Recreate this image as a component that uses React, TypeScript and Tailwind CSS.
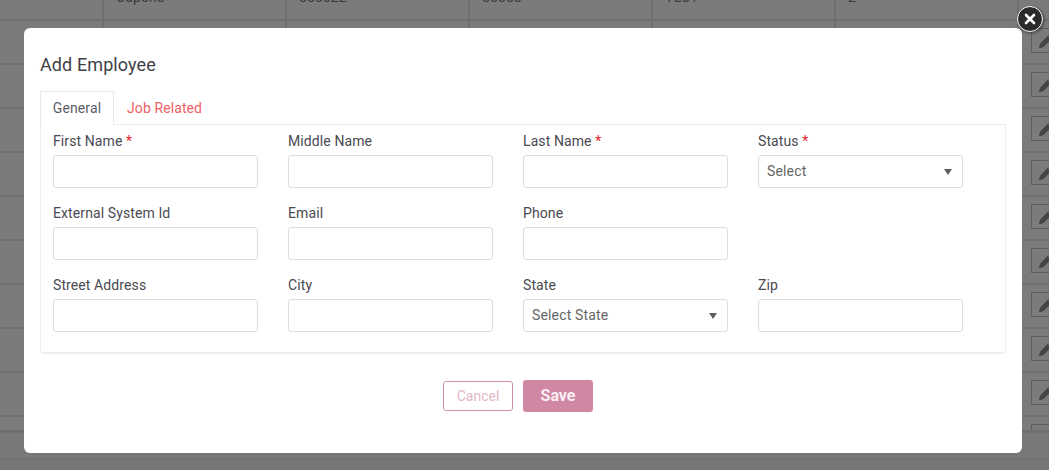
const rows = [0, 1, 2, 3, 4, 5, 6, 7, 8, 9, 10];
const topCells = ["", "Capone", "553022", "55358", "TEST", "2"];

function Pencil() {
  return (
    <svg viewBox="0 0 16 16" className="w-[17px] h-[17px] shrink-0" fill="#454545">
      <path d="M11.5 1.2l3.3 3.3-1.5 1.5L10 2.7zM9.2 3.5l3.3 3.3-7.6 7.6-4 .9.9-4z" />
    </svg>
  );
}

function Row({ first, last }: { first?: boolean; last?: boolean }) {
  return (
    <div className={`flex overflow-hidden border-b-2 border-[#6f6f6f] ${first ? "h-[21px]" : last ? "h-[15px] border-b-0" : "h-[44px]"}`}>
      {[102, 183, 183, 183, 183, 183].map((w, i) => (
        <div key={i} className={`shrink-0 overflow-hidden pl-[12px] ${i > 0 ? "border-l-2 border-[#6f6f6f]" : ""}`} style={{ width: w }}>
          {first && <div className="-mt-[13px] text-[14px] leading-[20px] tracking-[0.1px] text-[#3c3c3c]">{topCells[i]}</div>}
        </div>
      ))}
      <div className="shrink-0 border-l-2 border-[#6f6f6f] pl-[12px] pt-[7px]">
        {!first && (
          <div className="w-[30px] h-[25px] border border-[#5d5d5d] flex items-center pl-[6px]">
            <Pencil />
          </div>
        )}
      </div>
    </div>
  );
}

function Field({ label, required, children }: { label?: string; required?: boolean; children?: React.ReactNode }) {
  return (
    <div className="w-[205px]">
      {label && (
        <label className="block h-[24px] text-[14px] leading-[20px] tracking-[0.1px] text-[#4a4a52]">
          {label}
          {required && <span className="text-[#e8262a]"> *</span>}
        </label>
      )}
      {children}
    </div>
  );
}

function TextInput() {
  return <input className="block w-full h-[33px] bg-white border border-[#dddddd] rounded-[3px]" />;
}

function SelectBox({ text }: { text: string }) {
  return (
    <div className="h-[33px] bg-white border border-[#dddddd] rounded-[3px] flex items-center justify-between pl-2 pr-[10px] text-[14px] tracking-[0.15px] text-[#666666]">
      <span>{text}</span>
      <span className="w-0 h-0 border-l-[4px] border-r-[4px] border-t-[6px] border-l-transparent border-r-transparent border-t-[#5f5f5f]" />
    </div>
  );
}

export default function App() {
  return (
    <div className="relative w-[1049px] h-[470px] overflow-hidden bg-[#7b7b7b]" style={{ fontFamily: "Roboto, 'Liberation Sans', sans-serif" }}>
      <div className="h-[432px] overflow-hidden">
        {rows.map((r) => (
          <Row key={r} first={r === 0} last={r === 10} />
        ))}
      </div>
      <div className="h-[26px] bg-[#787878] border-t border-[#727272]" />
      <div className="h-[12px] bg-[#767676] border-t border-[#6f6f6f]" />

      <div className="absolute left-[24px] top-[28px] w-[998px] h-[425px] bg-white rounded-[6px] px-4">
        <h2 className="pt-[25px] text-[18px] leading-[24px] tracking-[0.1px] text-[#3f3f46]">Add Employee</h2>
        <div className="mt-[14px] flex h-[34px] text-[14px] tracking-[0.1px]">
          <div className="w-[74px] h-[34px] bg-white border border-[#e8e8e8] border-b-0 flex items-center justify-center text-[#5c6066] z-10">General</div>
          <div className="pl-[13px] flex items-center text-[#ee6267]">Job Related</div>
        </div>
        <div className="-mt-px w-[966px] h-[230px] border border-[#eeeeee] rounded-b-[4px] border-b-2 pl-3 pt-[6px]">
          <div className="flex flex-col gap-[15px]">
            <div className="flex gap-[30px]">
              <Field label="First Name" required><TextInput /></Field>
              <Field label="Middle Name"><TextInput /></Field>
              <Field label="Last Name" required><TextInput /></Field>
              <Field label="Status" required><SelectBox text="Select" /></Field>
            </div>
            <div className="flex gap-[30px]">
              <Field label="External System Id"><TextInput /></Field>
              <Field label="Email"><TextInput /></Field>
              <Field label="Phone"><TextInput /></Field>
            </div>
            <div className="flex gap-[30px]">
              <Field label="Street Address"><TextInput /></Field>
              <Field label="City"><TextInput /></Field>
              <Field label="State"><SelectBox text="Select State" /></Field>
              <Field label="Zip"><TextInput /></Field>
            </div>
          </div>
        </div>
        <div className="mt-[26px] flex justify-center gap-[10px] items-center pr-[10px]">
          <button className="w-[70px] h-[30px] border border-[#d28fa9] rounded-[3px] text-[14px] text-[#e3b7c8] bg-white">Cancel</button>
          <button className="w-[70px] h-[32px] rounded-[3px] text-[16px] font-bold text-[#fbeef3] bg-[#d087a4]">Save</button>
        </div>
      </div>

      <button className="absolute left-[1017px] top-[6px] w-[26px] h-[26px] rounded-full bg-[#2a2a2a] border border-white flex items-center justify-center shadow-[1px_1px_3px_rgba(0,0,0,0.5)]">
        <svg viewBox="0 0 12 12" className="w-[12px] h-[12px]" stroke="white" strokeWidth="2.6" strokeLinecap="round">
          <path d="M2 2l8 8M10 2l-8 8" />
        </svg>
      </button>
    </div>
  );
}
